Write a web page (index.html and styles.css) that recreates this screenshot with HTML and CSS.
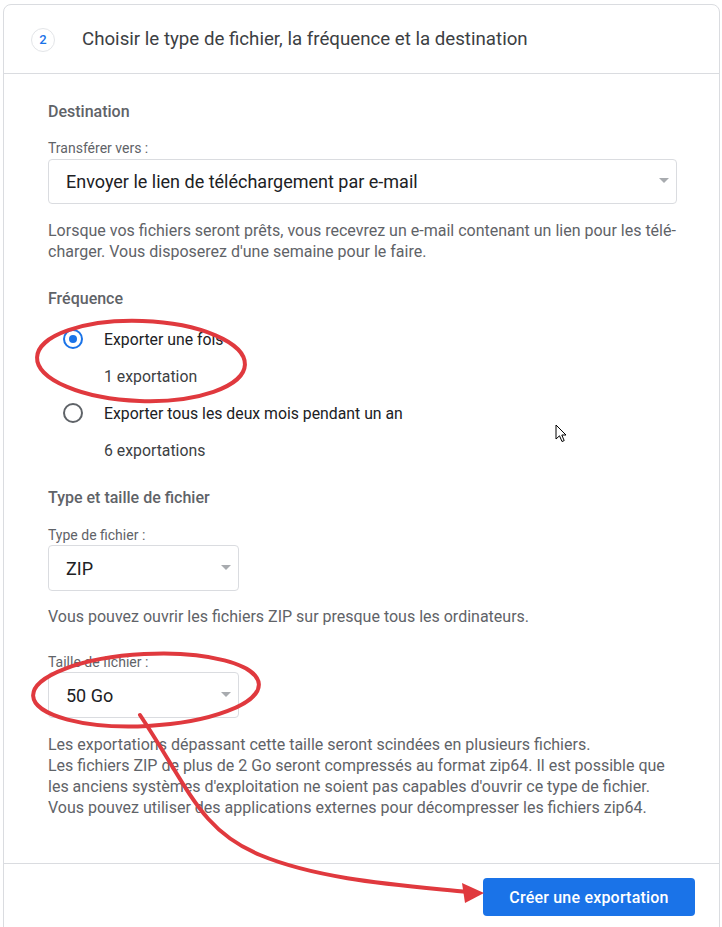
FILE: index.html
```html
<!DOCTYPE html>
<html lang="fr">
<head>
    <meta charset="UTF-8">
    <meta name="viewport" content="width=device-width, initial-scale=1.0">
    <title>Choisir le type de fichier</title>
    <link rel="stylesheet" href="styles.css">
</head>
<body>
    <div class="card">
        <div class="card-header">
            <span class="step">2</span>
            <h2>Choisir le type de fichier, la fréquence et la destination</h2>
        </div>

        <div class="card-body">
            <h3>Destination</h3>
            <label class="field-label first">Transférer vers :</label>
            <div class="select wide">
                <span>Envoyer le lien de téléchargement par e-mail</span>
                <span class="caret"></span>
            </div>
            <p class="help">Lorsque vos fichiers seront prêts, vous recevrez un e-mail contenant un lien pour les télé-<br>charger. Vous disposerez d'une semaine pour le faire.</p>

            <h3 class="section">Fréquence</h3>
            <div class="options">
                <div class="option">
                    <div class="option-row">
                        <span class="radio checked"></span>
                        <span class="option-label">Exporter une fois</span>
                    </div>
                    <div class="option-sub">1 exportation</div>
                </div>
                <div class="option">
                    <div class="option-row">
                        <span class="radio"></span>
                        <span class="option-label">Exporter tous les deux mois pendant un an</span>
                    </div>
                    <div class="option-sub">6 exportations</div>
                </div>
            </div>

            <h3 class="section">Type et taille de fichier</h3>
            <label class="field-label">Type de fichier :</label>
            <div class="select small">
                <span>ZIP</span>
                <span class="caret"></span>
            </div>
            <p class="help tight">Vous pouvez ouvrir les fichiers ZIP sur presque tous les ordinateurs.</p>

            <label class="field-label gap">Taille de fichier :</label>
            <div class="select small">
                <span>50 Go</span>
                <span class="caret"></span>
            </div>
            <p class="help">Les exportations dépassant cette taille seront scindées en plusieurs fichiers.<br>
            Les fichiers ZIP de plus de 2 Go seront compressés au format zip64. Il est possible que<br>
            les anciens systèmes d'exploitation ne soient pas capables d'ouvrir ce type de fichier.<br>
            Vous pouvez utiliser des applications externes pour décompresser les fichiers zip64.</p>
        </div>

        <div class="card-footer">
            <button class="primary">Créer une exportation</button>
        </div>
    </div>

    <!-- annotations dessinées par-dessus la capture -->
    <svg class="marks" width="722" height="927" viewBox="0 0 722 927">
        <ellipse cx="141" cy="361" rx="104" ry="40" transform="rotate(2 141 361)" />
        <ellipse cx="146" cy="690" rx="113" ry="36" transform="rotate(-3 146 690)" />
        <path d="M140 715 C 190 790, 200 830, 260 855 S 400 885, 468 892" />
        <polygon class="head" points="484,893 462,883 465,903" />
    </svg>

    <svg class="cursor" width="14" height="20" viewBox="0 0 14 20">
        <path d="M1 1 L1 15 L4.5 11.8 L7 17.5 L9.2 16.6 L6.8 11 L11 11 Z" />
    </svg>
</body>
</html>
```

FILE: styles.css
```css
body {
    margin: 0;
    font-family: Roboto, "Liberation Sans", Arial, sans-serif;
    background: #fff;
    color: #5f6368;
}
.card {
    margin: 4px 2px 0 3px;
    height: 940px;
    border: 1px solid #dadce0;
    border-radius: 8px;
    box-sizing: border-box;
    display: flex;
    flex-direction: column;
}
.card-header {
    height: 68px;
    display: flex;
    align-items: center;
    padding-left: 27px;
    border-bottom: 1px solid #dadce0;
}
.step {
    width: 24px;
    height: 24px;
    border: 1px solid #e3e5e8;
    border-radius: 50%;
    box-sizing: border-box;
    display: flex;
    align-items: center;
    justify-content: center;
    font-size: 13px;
    font-weight: 500;
    color: #1a73e8;
    margin-top: 1px;
}
.card-header h2 {
    margin: -1px 0 0 27px;
    font-size: 18.7px;
    font-weight: 400;
    color: #3c4043;
}
.card-body {
    padding: 28px 42px 45px 44px;
    border-bottom: 1px solid #dadce0;
}
h3 {
    margin: 0;
    font-size: 16px;
    line-height: 20px;
    font-weight: 500;
    color: #5f6368;
}
h3.section {
    margin-top: 27px;
}
.field-label {
    display: block;
    margin-top: 19px;
    font-size: 14px;
    line-height: 16px;
    color: #5f6368;
}
.field-label.first {
    margin-top: 18px;
}
.field-label.gap {
    margin-top: 27px;
}
.select {
    margin-top: 3px;
    height: 45px;
    border: 1px solid #dadce0;
    border-radius: 4px;
    box-sizing: border-box;
    display: flex;
    align-items: center;
    justify-content: space-between;
    padding: 0 7px 0 17px;
    font-size: 18px;
    color: #202124;
}
.select.small {
    width: 191px;
    height: 46px;
    margin-top: 2px;
}
.caret {
    width: 0;
    height: 0;
    border-left: 5px solid transparent;
    border-right: 5px solid transparent;
    border-top: 5px solid #a8abaf;
    margin-top: -2px;
}
.help {
    margin: 16px 0 0;
    font-size: 16px;
    line-height: 21px;
    color: #5f6368;
}
.help.tight {
    margin-top: 15px;
}
.options {
    margin-top: 20px;
    display: flex;
    flex-direction: column;
    gap: 16px;
}
.option-row {
    display: flex;
    align-items: center;
    height: 20px;
}
.radio {
    width: 20px;
    height: 20px;
    margin-left: 15px;
    border: 2px solid #5f6368;
    border-radius: 50%;
    box-sizing: border-box;
    display: flex;
    align-items: center;
    justify-content: center;
}
.radio.checked {
    border-color: #1a73e8;
}
.radio.checked::after {
    content: "";
    width: 8px;
    height: 8px;
    border-radius: 50%;
    background: #1a73e8;
}
.option-label {
    margin-left: 21px;
    font-size: 15.8px;
    color: #202124;
}
.option-sub {
    margin: 18px 0 0 56px;
    line-height: 20px;
    font-size: 15.8px;
    color: #3c4043;
}
.card-footer {
    display: flex;
    justify-content: flex-end;
    padding: 14px 24px 14px 0;
}
.primary {
    width: 212px;
    height: 38px;
    background-color: #1a73e8;
    color: #fff;
    border: none;
    border-radius: 4px;
    font-family: Roboto, "Liberation Sans", Arial, sans-serif;
    font-size: 16px;
    font-weight: 500;
    letter-spacing: 0.2px;
    cursor: pointer;
}
.marks {
    position: absolute;
    top: 0;
    left: 0;
    pointer-events: none;
}
.marks ellipse,
.marks path {
    fill: none;
    stroke: #e0393e;
    stroke-width: 4;
    stroke-linecap: round;
}
.marks .head {
    fill: #e0393e;
}
.cursor {
    position: absolute;
    left: 555px;
    top: 424px;
}
.cursor path {
    fill: #fff;
    stroke: #000;
    stroke-width: 1;
    stroke-linejoin: round;
}
```
